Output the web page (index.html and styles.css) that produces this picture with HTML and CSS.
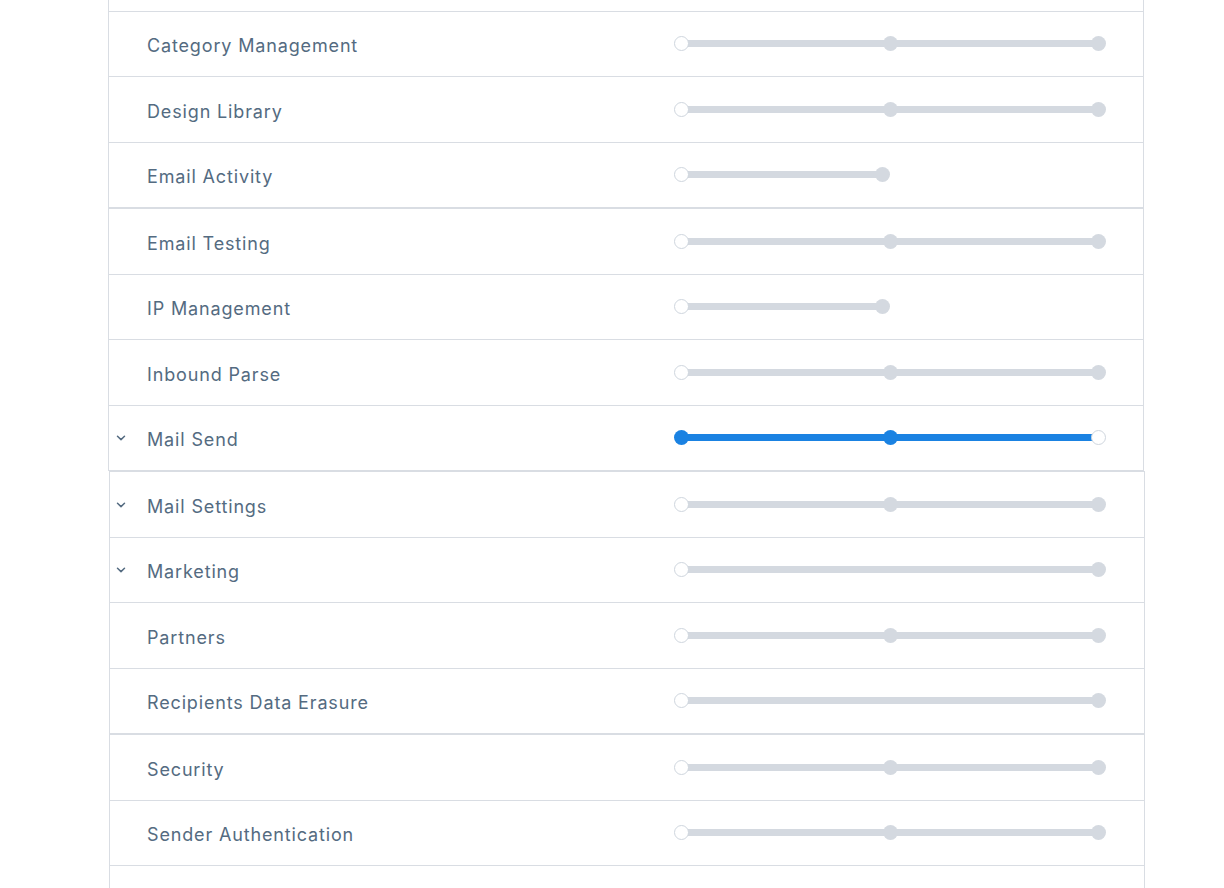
FILE: index.html
```html
<!DOCTYPE html>
<html lang="en">
<head>
<meta charset="utf-8">
<title>Permissions</title>
<link rel="stylesheet" href="styles.css">
</head>
<body>
<div class="scopes">
  <div class="group">
    <div class="row"><span class="caret"></span><span class="label"></span><div class="slider three"><i class="knob empty"></i><i class="knob"></i><i class="knob"></i></div></div>
    <div class="row"><span class="caret"></span><span class="label">Category Management</span><div class="slider three"><i class="knob empty"></i><i class="knob"></i><i class="knob"></i></div></div>
    <div class="row"><span class="caret"></span><span class="label">Design Library</span><div class="slider three"><i class="knob empty"></i><i class="knob"></i><i class="knob"></i></div></div>
    <div class="row"><span class="caret"></span><span class="label">Email Activity</span><div class="slider short"><i class="knob empty"></i><i class="knob"></i></div></div>
  </div>
  <div class="group">
    <div class="row"><span class="caret"></span><span class="label">Email Testing</span><div class="slider three"><i class="knob empty"></i><i class="knob"></i><i class="knob"></i></div></div>
    <div class="row"><span class="caret"></span><span class="label">IP Management</span><div class="slider short"><i class="knob empty"></i><i class="knob"></i></div></div>
    <div class="row"><span class="caret"></span><span class="label">Inbound Parse</span><div class="slider three"><i class="knob empty"></i><i class="knob"></i><i class="knob"></i></div></div>
    <div class="row"><span class="caret"><svg viewBox="0 0 10 6" width="10" height="6"><polyline points="1.5,1.2 5,4.6 8.5,1.2"/></svg></span><span class="label">Mail Send</span><div class="slider three active"><i class="knob on"></i><i class="knob on"></i><i class="knob empty"></i></div></div>
  </div>
  <div class="group shift">
    <div class="row"><span class="caret"><svg viewBox="0 0 10 6" width="10" height="6"><polyline points="1.5,1.2 5,4.6 8.5,1.2"/></svg></span><span class="label">Mail Settings</span><div class="slider three"><i class="knob empty"></i><i class="knob"></i><i class="knob"></i></div></div>
    <div class="row"><span class="caret"><svg viewBox="0 0 10 6" width="10" height="6"><polyline points="1.5,1.2 5,4.6 8.5,1.2"/></svg></span><span class="label">Marketing</span><div class="slider"><i class="knob empty"></i><i class="knob"></i></div></div>
    <div class="row"><span class="caret"></span><span class="label">Partners</span><div class="slider three"><i class="knob empty"></i><i class="knob"></i><i class="knob"></i></div></div>
    <div class="row"><span class="caret"></span><span class="label">Recipients Data Erasure</span><div class="slider"><i class="knob empty"></i><i class="knob"></i></div></div>
  </div>
  <div class="group shift">
    <div class="row"><span class="caret"></span><span class="label">Security</span><div class="slider three"><i class="knob empty"></i><i class="knob"></i><i class="knob"></i></div></div>
    <div class="row"><span class="caret"></span><span class="label">Sender Authentication</span><div class="slider three"><i class="knob empty"></i><i class="knob"></i><i class="knob"></i></div></div>
    <div class="row"><span class="caret"></span><span class="label"></span><div class="slider three"><i class="knob empty"></i><i class="knob"></i><i class="knob"></i></div></div>
  </div>
</div>
</body>
</html>
```
FILE: styles.css
```css
html, body {
  margin: 0;
  padding: 0;
  background: #ffffff;
  overflow: hidden;
}

body {
  font-family: Inter, "Open Sans", "Liberation Sans", sans-serif;
  color: #546b81;
}

.scopes {
  margin-top: -55px;
  margin-left: 108px;
  width: 1040px;
}

.group {
  width: 1036px;
  box-sizing: border-box;
  border: 1px solid #d9dde3;
  background: #ffffff;
}

.group.shift {
  margin-left: 1px;
}

.row {
  height: 64.5px;
  display: flex;
  align-items: center;
  border-top: 1px solid #d9dde3;
}

.row:first-child {
  border-top: none;
}

.caret {
  width: 38px;
  display: flex;
  justify-content: flex-start;
}

.shift .caret {
  width: 37px;
}

.caret svg {
  margin-left: 7px;
  margin-top: 1px;
  fill: none;
  stroke: #546b81;
  stroke-width: 1.5;
  stroke-linecap: round;
  stroke-linejoin: round;
}

.shift .caret svg {
  margin-left: 6px;
}

.label {
  flex: 1;
  font-size: 18px;
  line-height: 24px;
  letter-spacing: 0.85px;
  padding-top: 5px;
}

.slider {
  width: 432px;
  height: 15px;
  margin-right: 37px;
  display: flex;
  justify-content: space-between;
  align-items: center;
  background: linear-gradient(#d4d9e0, #d4d9e0) center / calc(100% - 15px) 7px no-repeat;
}

.shift .slider {
  margin-right: 38px;
}

.slider.short {
  width: 216px;
  margin-right: 253px;
}

.slider.active {
  background: linear-gradient(#1a82e2, #1a82e2) center / calc(100% - 15px) 7px no-repeat;
}

.knob {
  display: block;
  width: 15px;
  height: 15px;
  border-radius: 50%;
  background: #d4d9e0;
  box-sizing: border-box;
}

.knob.empty {
  background: #ffffff;
  border: 1px solid #cfd6de;
}

.knob.on {
  background: #1a82e2;
}
```
